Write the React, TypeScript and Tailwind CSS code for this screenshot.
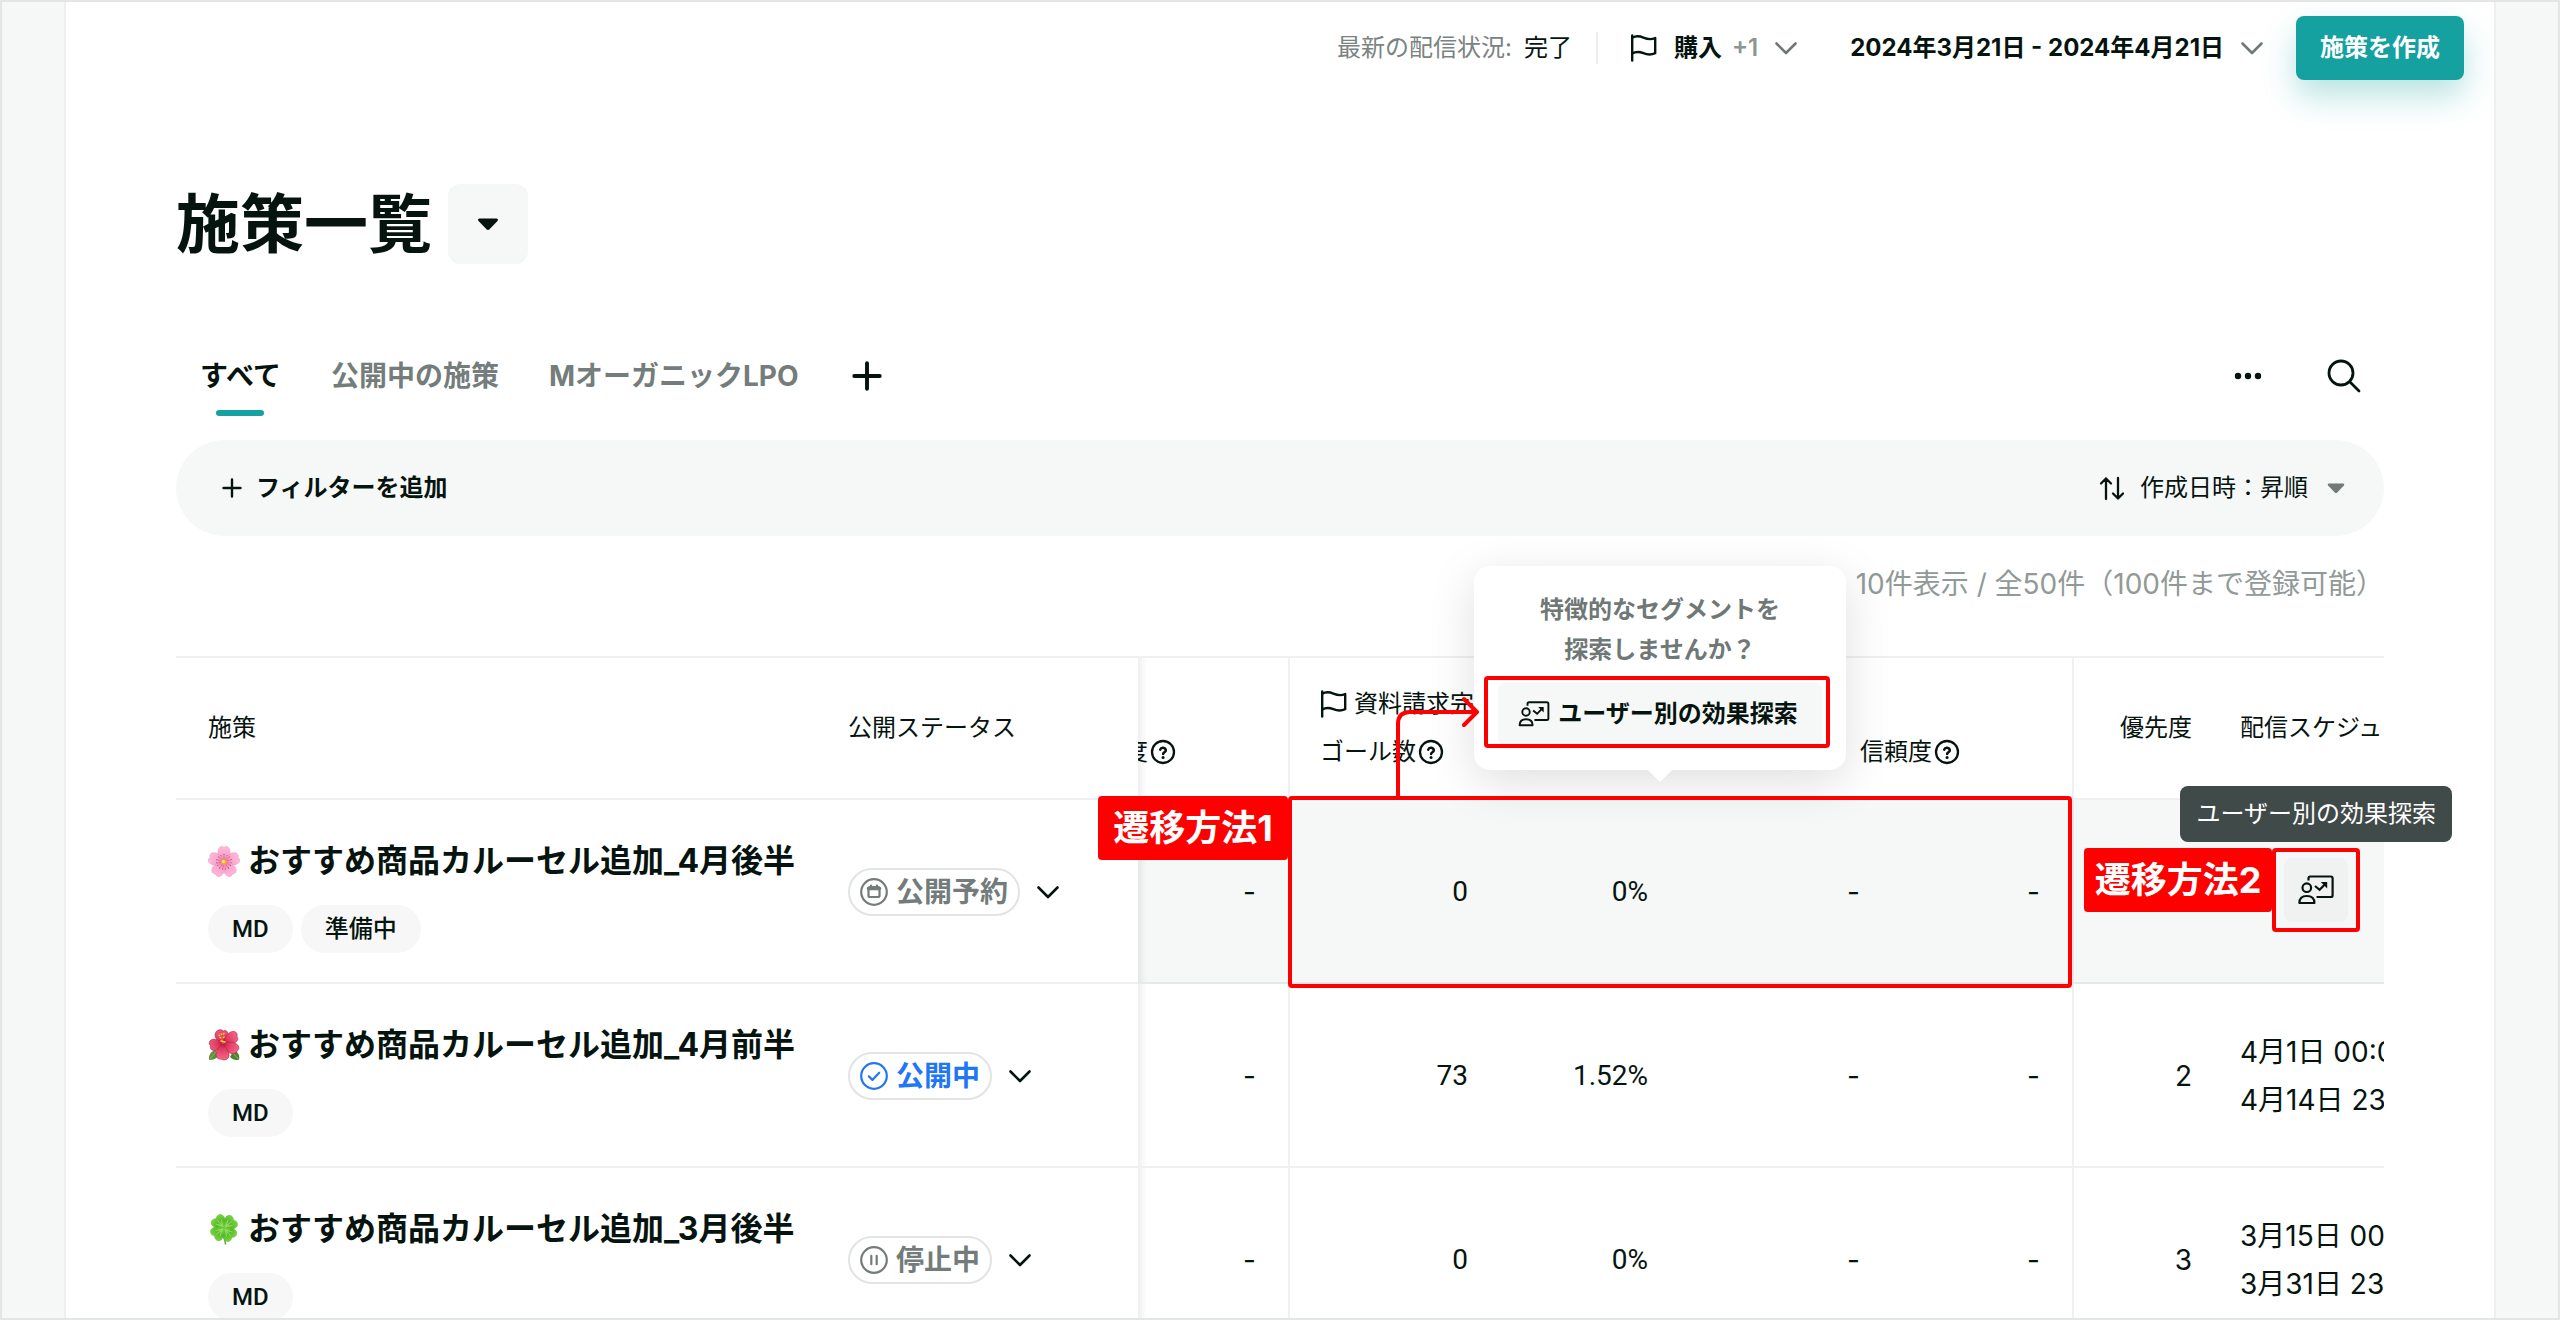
import React from "react";

type IconProps = { className?: string };

const line = {
  fill: "none",
  stroke: "currentColor",
  strokeLinecap: "round" as const,
  strokeLinejoin: "round" as const,
};

function Flag({ className = "" }: IconProps) {
  return (
    <svg viewBox="0 0 28 28" className={`h-7 w-7 shrink-0 ${className}`} {...line} strokeWidth={2.4}>
      <path d="M2.2 1.5v25" />
      <path d="M2.2 3.8C6 1.6 9.6 2 13.4 3.6s8 2.200 11.800 0.400V19.200c-3.800 1.800-8 1.600-11.800 0s-7.400-1.900-11.200.2" />
    </svg>
  );
}

function Chevron({ className = "" }: IconProps) {
  return (
    <svg viewBox="0 0 24 24" className={`h-6 w-6 shrink-0 ${className}`} {...line} strokeWidth={2.6}>
      <path d="M2.500 7.500L12 17l9.500-9.500" />
    </svg>
  );
}

function Caret({ className = "" }: IconProps) {
  return (
    <svg viewBox="0 0 24 24" className={`h-6 w-6 shrink-0 ${className}`} fill="currentColor">
      <path d="M3.500 6.500h17c1.300 0 1.900 1.500 1 2.400l-8 8.400c-.8.9-2.200.9-3 0l-8-8.400c-.9-.9-.3-2.400 1-2.400z" />
    </svg>
  );
}

function Plus({ className = "" }: IconProps) {
  return (
    <svg viewBox="0 0 24 24" className={`shrink-0 ${className}`} {...line}>
      <path d="M12 3.500v17M3.500 12h17" />
    </svg>
  );
}

function Help() {
  return (
    <svg viewBox="0 0 26 26" className="h-[26px] w-[26px] shrink-0" {...line} strokeWidth={2.3}>
      <circle cx="13" cy="13" r="11" />
      <path d="M10.200 10.600a2.900 2.900 0 0 1 5.600.8c0 1.700-2.700 2-2.700 3.600" strokeWidth={2.500} />
      <path d="M13.050 18.400h.01" strokeWidth={3} />
    </svg>
  );
}

function UserBoard({ className = "" }: IconProps) {
  return (
    <svg viewBox="0 0 36 30" className={`shrink-0 ${className}`} {...line} strokeWidth={2.2}>
      <path d="M10.500 5.500V3.300c0-1 .8-1.800 1.800-1.800h20.500c1 0 1.800.8 1.800 1.800v16.900c0 1-.8 1.800-1.800 1.800H18.500" strokeLinecap="butt" />
      <circle cx="8.800" cy="12.700" r="4.300" />
      <path d="M1.400 28c0-4.600 2.800-7 7.400-7s7.600 2.400 7.600 7z" />
      <path d="M17 11l4.600 3.800 5.200-5.400" strokeWidth={2.200} strokeLinecap="butt" strokeLinejoin="miter" />
      <path d="M22.800 7h6.400v6.400z" fill="currentColor" stroke="none" />
    </svg>
  );
}

function SakuraIcon() {
  return (
    <svg viewBox="0 0 32 32" className="h-8 w-8 shrink-0">
      <defs>
        <radialGradient id="sakura" gradientUnits="userSpaceOnUse" cx="16" cy="17" r="15">
          <stop offset="0" stopColor="#ee6aa8" />
          <stop offset="0.450" stopColor="#f9a3cb" />
          <stop offset="1" stopColor="#fcb9d9" />
        </radialGradient>
      </defs>
      {[0, 72, 144, 216, 288].map((a) => (
        <g key={a} transform={`rotate(${a} 16 17)`}>
          <path
            d="M16 17C11 13.500 8.800 8 10.500 4c1-2.300 3.500-3.500 5.500-1.500C18 .5 20.500 1.700 21.500 4c1.700 4-.5 9.500-5.500 13z"
            fill="url(#sakura)"
            stroke="#ee8dbb"
            strokeWidth=".5"
          />
          <path d="M16 15V9.500M14.600 14.500l-1.700-4M17.400 14.500l1.700-4" stroke="#c8497f" strokeWidth=".45" />
          <circle cx="16" cy="9.500" r=".55" fill="#b03a66" />
          <circle cx="12.900" cy="10.500" r=".55" fill="#b03a66" />
          <circle cx="19.100" cy="10.500" r=".55" fill="#b03a66" />
        </g>
      ))}
      <circle cx="16" cy="17" r="3" fill="#e9a92e" />
      <circle cx="15.500" cy="16.500" r="1.600" fill="#fbe07a" />
    </svg>
  );
}

function HibiscusIcon() {
  return (
    <svg viewBox="0 0 32 32" className="h-8 w-8 shrink-0">
      <defs>
        <radialGradient id="hibiscus" gradientUnits="userSpaceOnUse" cx="15" cy="14" r="17">
          <stop offset="0" stopColor="#b0173d" />
          <stop offset="0.350" stopColor="#e03a60" />
          <stop offset="1" stopColor="#f5688d" />
        </radialGradient>
      </defs>
      <path d="M1 31c-.5-5 2-9 7-10l2 6c-2 3-5 4-9 4z" fill="#5d8f3a" />
      <path d="M31 31c1-5-1-8-5-10l-4 7c2 2.500 5 3 9 3z" fill="#4f8131" />
      <path d="M1.500 30.500L8 23M30.500 30.500L25 24" stroke="#9cc46c" strokeWidth=".8" />
      <g fill="url(#hibiscus)" stroke="#b0173d" strokeWidth=".6">
        <path d="M15 15C9 12 5 7 8 3c2-3 6-2.500 7.500-1C18 .5 20.500 3 19.500 6c-.8 3-2.500 6-4.500 9z" />
        <path d="M15 15c1-6 5-13 11-12.500 3 .3 3.500 3.500 3 5C31 10 29 13.500 25 14.500c-3 .8-7 .8-10 .5z" />
        <path d="M15 15C10 9.500 4 9 2 12c-1.500 2-.5 4 .5 4.500C1.500 19 3.500 22 7 21.500c4-.5 6.500-3.500 8-6.500z" />
        <path d="M15 15c4-2.500 10-2.500 13.500 0 3.500 2.500 2.500 6 .5 7-1 3-5 3.500-8 1.500-3-1.800-5-5.500-6-8.500z" />
        <path d="M15 15c-3 2-7 6-7 10.500 0 3.500 3 5 5 4.500 3 2 7.500.5 8-3 .6-4-3-8.500-6-12z" />
      </g>
      <path d="M15 15l-1.500-8" stroke="#e85a35" strokeWidth="1.500" />
      <path d="M11 6l.5.500M13.500 5v.5M16 4.500l-.4.500M12 8.500l.5.300M16 8l-.5.500M13 12l4 1" stroke="#f8cf3e" strokeWidth="1.600" strokeLinecap="round" />
    </svg>
  );
}

function CloverIcon() {
  return (
    <svg viewBox="0 0 32 32" className="h-8 w-8 shrink-0">
      <defs>
        <radialGradient id="clover" gradientUnits="userSpaceOnUse" cx="16" cy="15" r="15">
          <stop offset="0" stopColor="#8ed94f" />
          <stop offset="0.500" stopColor="#55bd2b" />
          <stop offset="1" stopColor="#7fd840" />
        </radialGradient>
      </defs>
      <path d="M16 15c-.5 5 0 11 1.500 16" fill="none" stroke="#6cb83a" strokeWidth="1.600" strokeLinecap="round" />
      {[-40, 50, 140, 230].map((a) => (
        <g key={a} transform={`rotate(${a} 16 15)`}>
          <path
            d="M16 15C11.500 12 8.500 8.500 8.700 5c.2-3.500 5-5 7.300-2C18.300 0 23.100 1.500 23.300 5c.2 3.500-2.800 7-7.300 10z"
            fill="url(#clover)"
            stroke="#4fae2b"
            strokeWidth=".4"
          />
          <path d="M16 14V5M15.700 12l-3.200-5M16.300 12l3.200-5" stroke="#b3ea78" strokeWidth=".6" />
        </g>
      ))}
    </svg>
  );
}

function StatusIcon({ kind }: { kind: Status }) {
  return (
    <svg viewBox="0 0 28 28" className="h-7 w-7 shrink-0" {...line} strokeWidth={2.2}>
      <circle cx="14" cy="14" r="12.800" />
      {kind === "reserved" && (
        <>
          <rect x="8.500" y="9" width="11" height="10" rx="1.500" />
          <path d="M8.500 10.500h11" strokeWidth={3.400} />
          <path d="M11 7.500v2M17 7.500v2" />
        </>
      )}
      {kind === "live" && <path d="M8.800 14.300l3.600 3.600 6.800-7.200" />}
      {kind === "stopped" && <path d="M11.300 9.800v8.400M16.700 9.800v8.400" />}
    </svg>
  );
}

type Status = "reserved" | "live" | "stopped";

const statusLabel: Record<Status, string> = { reserved: "公開予約", live: "公開中", stopped: "停止中" };

type Row = {
  icon: React.ReactNode;
  name: string;
  tags: string[];
  status: Status;
  goals: string;
  rate: string;
  priority: string;
  schedule: string[];
  hovered?: boolean;
};

const rows: Row[] = [
  { icon: <SakuraIcon />, name: "おすすめ商品カルーセル追加_4月後半", tags: ["MD", "準備中"], status: "reserved", goals: "0", rate: "0%", priority: "", schedule: [], hovered: true },
  { icon: <HibiscusIcon />, name: "おすすめ商品カルーセル追加_4月前半", tags: ["MD"], status: "live", goals: "73", rate: "1.52%", priority: "2", schedule: ["4月1日 00:00", "4月14日 23:59"] },
  { icon: <CloverIcon />, name: "おすすめ商品カルーセル追加_3月後半", tags: ["MD"], status: "stopped", goals: "0", rate: "0%", priority: "3", schedule: ["3月15日 00:00", "3月31日 23:59"] },
];

const head = "h-36 border-y-2 border-black/6 p-0 text-left font-normal whitespace-nowrap";
const groupEdge = "border-l-2 border-l-black/6";
const stickyShade = "shadow-[inset_10px_0_6px_-6px_rgba(0,0,0,0.07)]";
const figure = "font-['Roboto','Noto_Sans_CJK_JP',sans-serif] text-right";

function TopBar() {
  return (
    <header className="flex h-[92px] items-center justify-end pr-[30px] text-2xl">
      <p className="flex gap-3">
        <span className="text-[#7a8381]">最新の配信状況:</span>
        <span>完了</span>
      </p>
      <div className="mx-6 h-8 w-0.5 bg-[#eceeee]" />
      <button className="flex items-center pl-2 font-bold">
        <Flag />
        <span className="ml-4">購入</span>
        <span className="ml-2.5 font-semibold text-[#8c9593]">+1</span>
        <Chevron className="ml-4 text-[#6f7876]" />
      </button>
      <button className="ml-[52px] flex items-center font-bold">
        2024年3月21日 - 2024年4月21日
        <Chevron className="ml-4 text-[#6f7876]" />
      </button>
      <button className="ml-8 h-16 rounded-lg bg-[#14a1a0] px-6 font-bold text-white shadow-[0_16px_32px_rgba(20,161,160,0.3)]">
        施策を作成
      </button>
    </header>
  );
}

function Tabs() {
  return (
    <nav className="mt-[88px] flex items-start pr-5 pl-6 text-[28px] leading-[48px] font-bold">
      <div className="flex gap-[50px]">
        <button className="flex flex-col items-center gap-2.5">
          すべて
          <span className="h-1.5 w-12 rounded-full bg-[#14a1a0]" />
        </button>
        <button className="h-12 text-[#747d7b]">公開中の施策</button>
        <button className="h-12 text-[#747d7b]">MオーガニックLPO</button>
        <button aria-label="タブを追加" className="flex h-12 items-center">
          <Plus className="h-9 w-9 stroke-[2.6]" />
        </button>
      </div>
      <div className="ml-auto flex h-12 items-center gap-14">
        <button aria-label="メニュー">
          <svg viewBox="0 0 40 40" className="h-10 w-10" fill="currentColor">
            <circle cx="10" cy="20" r="3.200" />
            <circle cx="20" cy="20" r="3.200" />
            <circle cx="30" cy="20" r="3.200" />
          </svg>
        </button>
        <button aria-label="検索">
          <svg viewBox="0 0 40 40" className="h-10 w-10" {...line} strokeWidth={2.800}>
            <circle cx="17" cy="17" r="12" />
            <path d="M26 26l9 9" />
          </svg>
        </button>
      </div>
    </nav>
  );
}

function FilterBar() {
  return (
    <div className="mt-6 flex h-24 items-center justify-between rounded-full bg-[#f6f8f7] pr-9 pl-11 text-2xl">
      <button className="flex items-center gap-3 font-bold">
        <Plus className="h-6 w-6 stroke-[2.4]" />
        フィルターを追加
      </button>
      <button className="flex items-center">
        <svg viewBox="0 0 28 28" className="mr-3.5 h-7 w-7" {...line} strokeWidth={2.300}>
          <path d="M8 25V4.500M3 9.500l5-5 5 5M20 4v20.500M15 19.500l5 5 5-5" />
        </svg>
        作成日時：昇順
        <Caret className="ml-4 p-0.5 text-[#717a78]" />
      </button>
    </div>
  );
}

function CampaignTable() {
  return (
    <table className="w-[2336px] min-w-full table-fixed border-separate border-spacing-0 text-[28px]">
      <colgroup>
        <col className="w-[640px]" />
        <col className="w-[322px]" />
        <col className="w-[150px]" />
        <col className="w-[180px]" />
        <col className="w-[180px]" />
        <col className="w-[212px]" />
        <col className="w-[212px]" />
        <col className="w-[120px]" />
        <col />
      </colgroup>
      <thead className="text-2xl leading-[48px]">
        <tr>
          <th className={`${head} pl-8`}>施策</th>
          <th className={`${head} pl-8`}>公開ステータス</th>
          <th className={`${head} ${stickyShade}`}>
            <div className="flex items-center justify-end gap-0.5 overflow-hidden pt-12 pr-28">
              信頼度
              <Help />
            </div>
          </th>
          <th className={`${head} ${groupEdge} pl-[30px]`}>
            <div className="flex items-center gap-1.5">
              <Flag />
              資料請求完了
            </div>
            <div className="flex items-center gap-0.5">
              ゴール数
              <Help />
            </div>
          </th>
          <td className={head} />
          <td className={head} />
          <th className={head}>
            <div className="flex items-center gap-0.5 pt-12">
              信頼度
              <Help />
            </div>
          </th>
          <th className={`${head} ${groupEdge}`}>
            <div className="text-right">優先度</div>
          </th>
          <th className={`${head} pl-12`}>配信スケジュール</th>
        </tr>
      </thead>
      <tbody>
        {rows.map((row) => {
          const cell = `h-46 border-b-2 border-black/6 p-0 pt-0.5 whitespace-nowrap ${row.hovered ? "bg-[#f6f8f7]" : ""}`;
          return (
            <tr key={row.name}>
              <td className="h-46 border-b-2 border-black/6 p-0 pt-2 pl-8">
                <div className="flex h-12 items-center gap-2 text-[32px] font-bold whitespace-nowrap">
                  {row.icon}
                  {row.name}
                </div>
                <div className="mt-5 flex gap-2">
                  {row.tags.map((tag) => (
                    <span
                      key={tag}
                      className="flex h-12 items-center rounded-full bg-[#f7f7f7] px-6 font-['Roboto','Noto_Sans_CJK_JP',sans-serif] text-2xl font-medium"
                    >
                      {tag}
                    </span>
                  ))}
                </div>
              </td>
              <td className="h-46 border-b-2 border-black/6 p-0 pt-0.5 pl-8">
                <button className="flex items-center gap-4 font-bold">
                  <span
                    className={`flex h-12 items-center gap-2 rounded-full border-2 border-[#e2e3e3] px-2.5 ${
                      row.status === "live" ? "text-[#2076f4]" : "text-[#737c7a]"
                    }`}
                  >
                    <StatusIcon kind={row.status} />
                    {statusLabel[row.status]}
                  </span>
                  <Chevron />
                </button>
              </td>
              <td className={`${cell} ${stickyShade} pr-8 text-right`}>-</td>
              <td className={`${cell} ${groupEdge} ${figure}`}>{row.goals}</td>
              <td className={`${cell} ${figure}`}>{row.rate}</td>
              <td className={`${cell} text-right`}>-</td>
              <td className={`${cell} pr-8 text-right`}>-</td>
              <td className={`${cell} ${groupEdge} text-right`}>{row.priority}</td>
              <td className={`${cell} pl-12 leading-[48px]`}>
                {row.schedule.map((s) => (
                  <div key={s}>{s}</div>
                ))}
              </td>
            </tr>
          );
        })}
      </tbody>
    </table>
  );
}

function SegmentPopover() {
  return (
    <div className="absolute -top-[90px] left-[1298px] w-[372px] rounded-2xl bg-white p-6 text-center text-2xl font-bold shadow-[0_12px_48px_rgba(0,10,8,0.13)]">
      <p className="leading-10 text-[#6f7876]">
        特徴的なセグメントを
        <br />
        探索しませんか？
      </p>
      <div className="relative mt-3">
        <button className="flex h-16 w-full items-center justify-center gap-2 rounded-lg bg-[#f6f8f7] pr-1">
          <UserBoard className="h-[26px] w-8" />
          ユーザー別の効果探索
        </button>
        <div className="pointer-events-none absolute -top-1.5 -right-2 -bottom-0.5 -left-3.5 rounded border-4 border-[#ff0000]" />
      </div>
      <svg viewBox="0 0 24 12" className="absolute top-full left-1/2 h-3 w-6 -translate-x-1/2" fill="#fff">
        <path d="M0 0h24L12 12z" />
      </svg>
    </div>
  );
}

function Annotations() {
  return (
    <>
      <div className="pointer-events-none absolute top-[140px] left-[1112px] h-48 w-[784px] rounded border-4 border-[#ff0000]" />
      <div className="absolute top-[140px] left-[922px] flex h-16 w-[190px] items-center justify-center rounded bg-[#ff0000] text-4xl font-bold text-white">
        遷移方法1
      </div>
      <svg viewBox="0 0 88 102" className="absolute top-[40px] left-[1218px] h-[102px] w-[88px]" {...line} stroke="#ff0000" strokeWidth={4}>
        <path d="M4 102V28Q4 16 16 16H83M70 3l13 13-13 13" />
      </svg>

      <div className="absolute top-[130px] -right-[68px] flex h-14 items-center rounded-lg bg-[#3f4a49] px-4 text-2xl text-white">
        ユーザー別の効果探索
      </div>
      <div className="absolute top-[192px] right-6 flex items-start">
        <div className="flex h-16 w-[188px] items-center justify-center rounded bg-[#ff0000] text-4xl font-bold text-white">
          遷移方法2
        </div>
        <div className="flex h-[84px] w-[88px] items-center justify-center rounded border-4 border-[#ff0000] bg-[#f6f8f7]">
          <button aria-label="ユーザー別の効果探索" className="flex h-16 w-16 items-center justify-center rounded-lg bg-[#f0f2f1]">
            <UserBoard className="h-[30px] w-9" />
          </button>
        </div>
      </div>
    </>
  );
}

export default function App() {
  return (
    <div className="flex h-screen overflow-hidden border-2 border-[#e4e6e5] bg-white font-['Inter','Noto_Sans_CJK_JP',sans-serif] text-[#06140f]">
      <aside className="w-16 shrink-0 border-r-2 border-[#eef0ef] bg-[#f6f8f7]" />
      <main className="min-w-0 flex-1">
        <TopBar />
        <div className="px-[110px] pt-[90px]">
          <div className="flex h-20 items-center gap-4">
            <h1 className="text-[64px] font-bold">施策一覧</h1>
            <button aria-label="一覧を切り替え" className="flex h-20 w-20 items-center justify-center rounded-xl bg-[#f6f8f7]">
              <Caret />
            </button>
          </div>
          <Tabs />
          <FilterBar />
          <p className="mb-6 flex h-24 items-center justify-end text-[28px] text-[#929a98]">
            10件表示 / 全50件（100件まで登録可能）
          </p>
          <div className="relative">
            <div className="overflow-hidden">
              <CampaignTable />
            </div>
            <SegmentPopover />
            <Annotations />
          </div>
        </div>
      </main>
      <aside className="w-16 shrink-0 border-l-2 border-[#eef0ef] bg-[#f6f8f7]" />
    </div>
  );
}
